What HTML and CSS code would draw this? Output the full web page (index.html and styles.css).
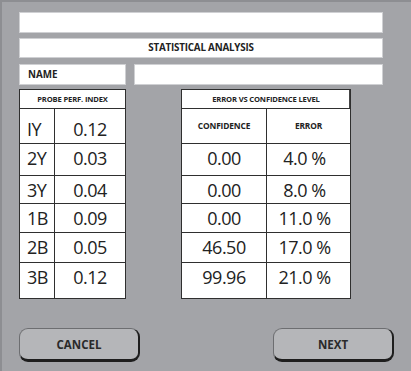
FILE: index.html
```
<!DOCTYPE html>
<html lang="en">
<head>
    <meta charset="UTF-8">
    <meta name="viewport" content="width=device-width, initial-scale=1.0">
    <title>Statistical Analysis</title>
    <link rel="stylesheet" href="styles.css">
</head>
<body>
    <div class="screen">
        <div class="bar title-bar"></div>
        <div class="bar heading-bar">STATISTICAL ANALYSIS</div>
        <div class="name-row">
            <div class="bar name-label">NAME</div>
            <div class="bar name-field"></div>
        </div>
        <div class="tables">
            <div class="grid probe">
                <div class="cell head span">PROBE PERF. INDEX</div>
                <div class="cell label first">IY</div><div class="cell value first">0.12</div>
                <div class="cell label">2Y</div><div class="cell value">0.03</div>
                <div class="cell label">3Y</div><div class="cell value">0.04</div>
                <div class="cell label">1B</div><div class="cell value">0.09</div>
                <div class="cell label">2B</div><div class="cell value">0.05</div>
                <div class="cell label">3B</div><div class="cell value">0.12</div>
            </div>
            <div class="grid errors">
                <div class="cell head span">ERROR VS CONFIDENCE LEVEL</div>
                <div class="cell head sub">CONFIDENCE</div><div class="cell head sub">ERROR</div>
                <div class="cell value">0.00</div><div class="cell value pct">4.0 %</div>
                <div class="cell value">0.00</div><div class="cell value pct">8.0 %</div>
                <div class="cell value">0.00</div><div class="cell value pct">11.0 %</div>
                <div class="cell value">46.50</div><div class="cell value pct">17.0 %</div>
                <div class="cell value">99.96</div><div class="cell value pct">21.0 %</div>
            </div>
        </div>
        <div class="buttons">
            <button class="btn">CANCEL</button>
            <button class="btn">NEXT</button>
        </div>
    </div>
</body>
</html>
```
FILE: styles.css
```
body {
    margin: 0;
    padding: 0;
    background-color: #a3a4a8;
    font-family: "Open Sans", "Noto Sans", sans-serif;
    color: #222;
}
.screen {
    width: 411px;
    height: 371px;
    box-sizing: border-box;
    border-top: 2px solid #8d8e92;
    border-left: 2px solid #8d8e92;
    padding: 10px 28px 0 17px;
    background-color: #a3a4a8;
}
.bar {
    background: #fff;
    border: 1px solid #cfd0d3;
    box-sizing: border-box;
}
.title-bar {
    height: 21px;
}
.heading-bar {
    height: 20px;
    margin-top: 5px;
    font-size: 9.8px;
    font-weight: 700;
    letter-spacing: -0.2px;
    text-align: center;
    line-height: 18px;
}
.name-row {
    display: grid;
    grid-template-columns: 107px 1fr;
    gap: 8px;
    margin-top: 6px;
    height: 20px;
}
.name-label {
    font-size: 9.8px;
    font-weight: 700;
    line-height: 19px;
    padding-left: 8px;
}
.tables {
    display: flex;
    gap: 55px;
    margin-top: 5px;
}
.grid {
    display: grid;
    gap: 1px;
    padding: 1px;
    background: #2f2f2f;
    grid-template-rows: 18px 34px 31px 27px 28px 29px 35px;
}
.probe {
    width: 107px;
    box-sizing: border-box;
    grid-template-columns: 34px 1fr;
}
.errors {
    width: 170px;
    box-sizing: border-box;
    grid-template-columns: 84px 1fr;
}
.cell {
    background: #fff;
    font-size: 18px;
    line-height: 18px;
    letter-spacing: -0.5px;
    padding-top: 5px;
    text-align: center;
}
.cell.first {
    padding-top: 11px;
}
.cell.label {
    text-align: left;
    padding-left: 7px;
}
.cell.pct {
    padding-right: 8px;
}
.head {
    font-size: 7.6px;
    font-weight: 700;
    letter-spacing: -0.15px;
    line-height: 18px;
    padding-top: 0;
}
.span {
    grid-column: span 2;
}
.errors .span {
    box-shadow: inset -1px 0 0 #444;
}
.sub {
    font-size: 8.4px;
    line-height: 34px;
}
.buttons {
    display: flex;
    justify-content: space-between;
    margin-top: 29px;
    margin-right: -11px;
}
.btn {
    width: 121px;
    height: 34px;
    background: #b5b6b9;
    border: 1px solid #6d6e71;
    border-right: 2px solid #1e1e1e;
    border-bottom: 3px solid #1e1e1e;
    border-radius: 9px;
    font-family: "Open Sans", sans-serif;
    font-size: 11.5px;
    font-weight: 700;
    color: #2a2a2a;
    padding: 0;
    cursor: pointer;
}
```
